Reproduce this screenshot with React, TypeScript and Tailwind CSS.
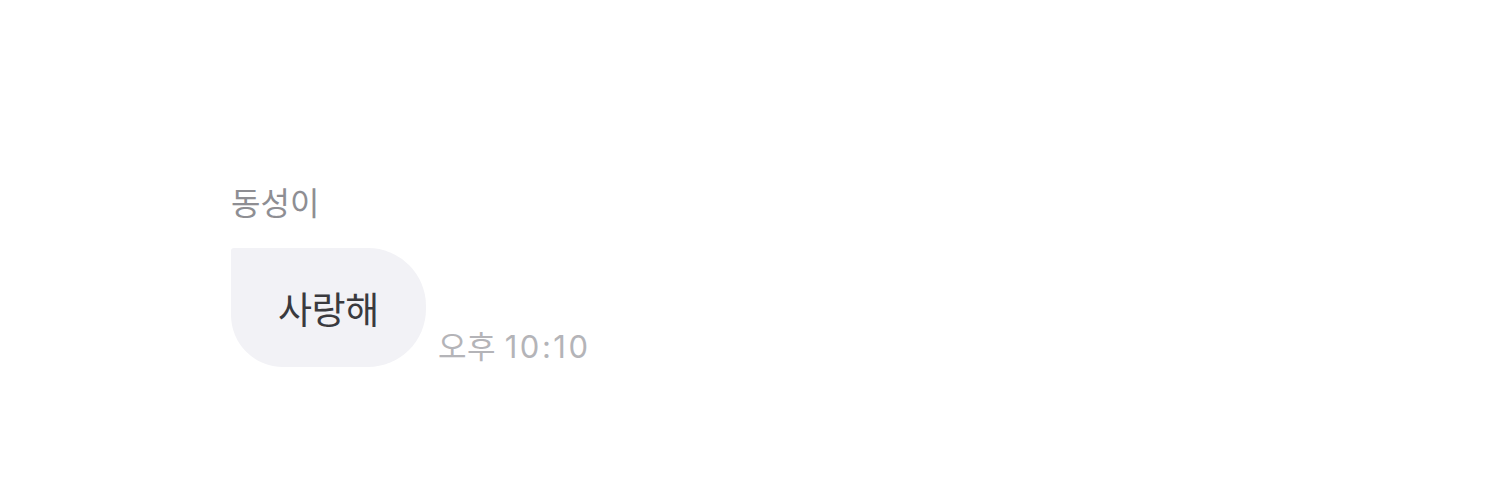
export default function App() {
  return (
    <div
      className="w-[1500px] h-[499px] bg-white pl-[231px] pt-[180px]"
      style={{ fontFamily: '"Noto Sans CJK KR", "Noto Sans", sans-serif' }}
    >
      <div className="text-[32px] leading-[42px] text-[#8e8e93]">동성이</div>
      <div className="mt-[26px] flex items-end gap-[12px]">
        <div className="h-[119px] w-[195px] flex items-center justify-center bg-[#f2f2f6] rounded-tl-[3px] rounded-tr-[58px] rounded-br-[58px] rounded-bl-[52px]">
          <span className="text-[37px] leading-[44px] text-[#3a3a3e] tracking-[-0.3px]">사랑해</span>
        </div>
        <div
          className="text-[31px] leading-[36px] text-[#b4b4b8] mb-[2px] whitespace-nowrap"
          style={{ fontFamily: 'Inter, "Noto Sans CJK KR", sans-serif' }}
        >
          <span className="tracking-[0.5px]">오후</span> <span className="tracking-[2.5px]">10:10</span>
        </div>
      </div>
    </div>
  );
}
